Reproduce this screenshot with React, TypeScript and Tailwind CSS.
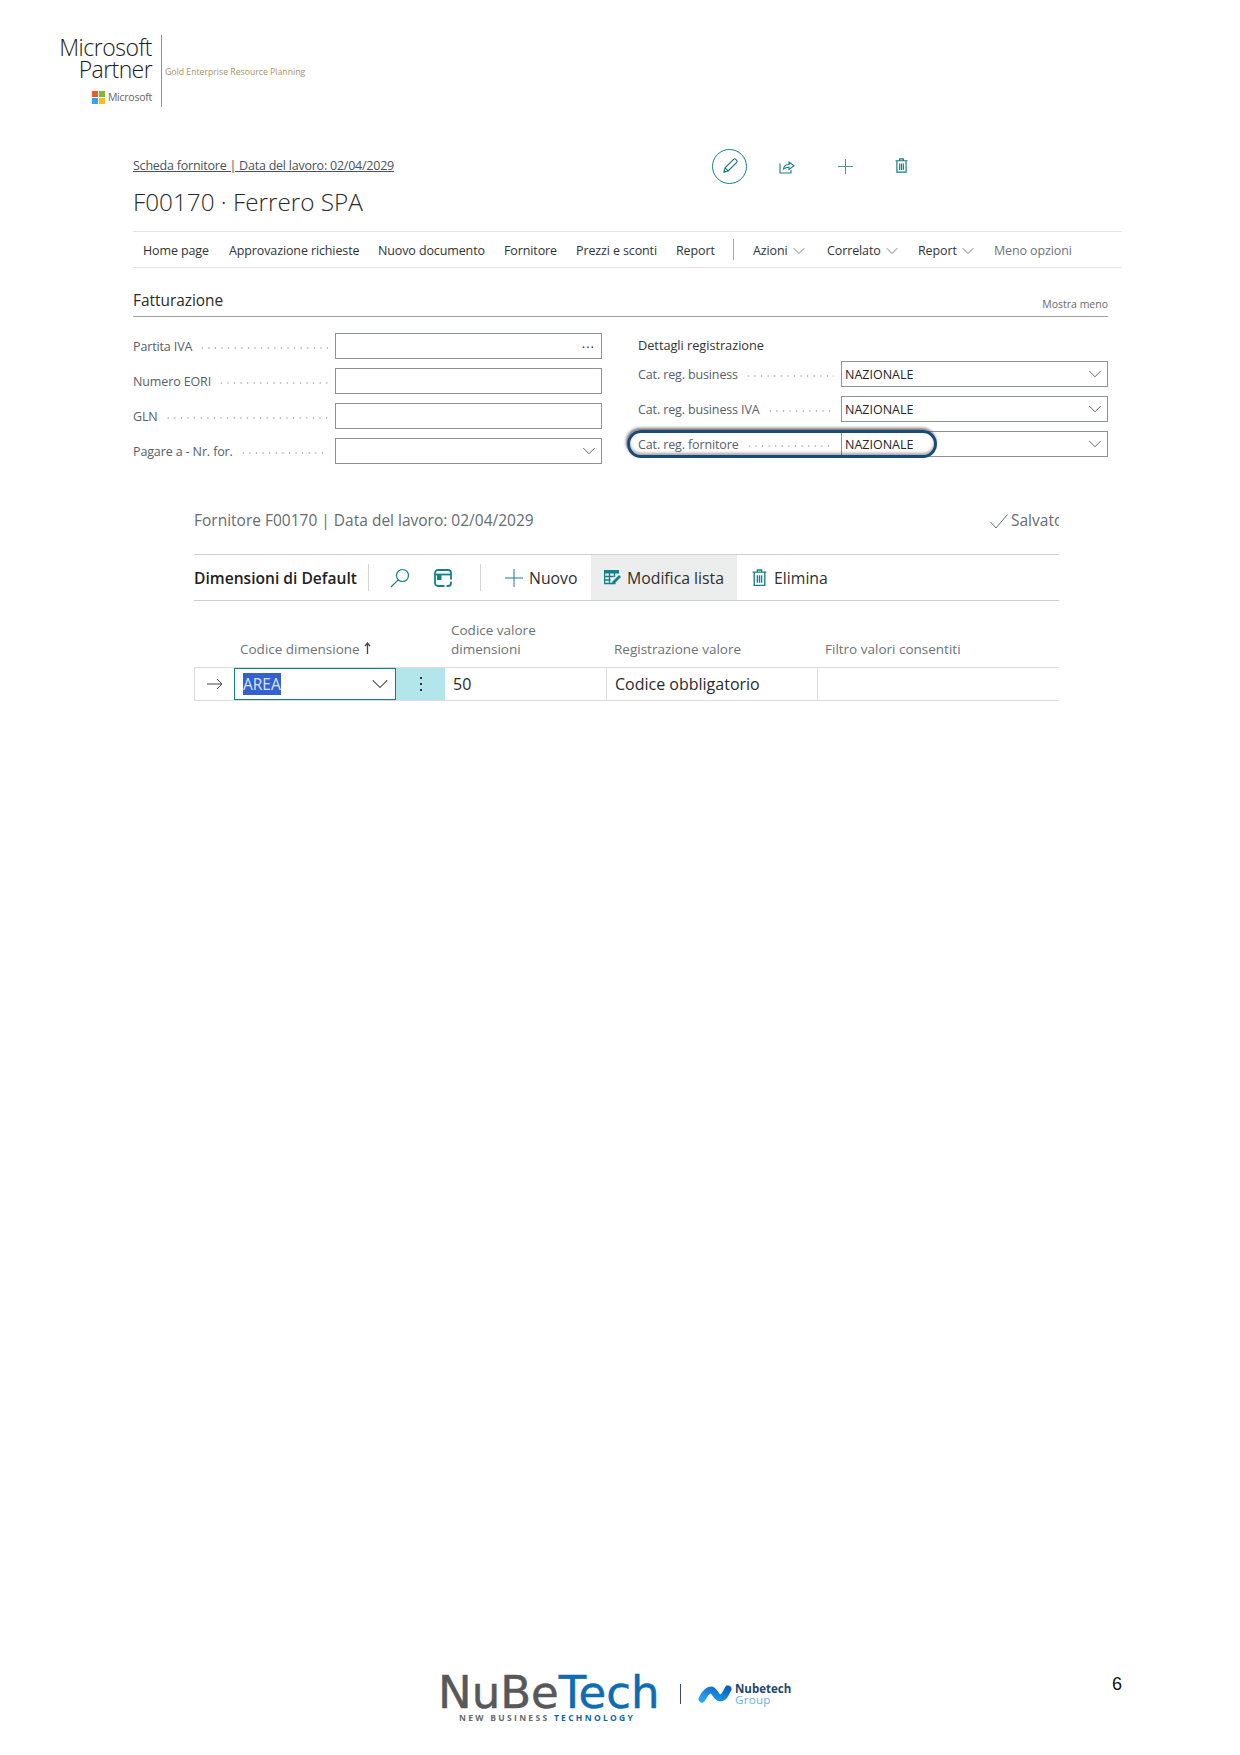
import React, { FC } from "react";
import { ChevronDown } from "lucide-react";

const uiFont = "font-['Open_Sans','Noto_Sans',sans-serif]";
const dots =
  "flex-1 h-[4px] mx-[7px] bg-[radial-gradient(circle,#b4b8bd_0.8px,transparent_1.1px)] bg-[length:6.6px_4px]";

const PencilIcon: FC = () => (
  <svg width="18" height="18" viewBox="0 0 18 18" fill="none" stroke="#14747e" strokeWidth="1.1">
    <path d="M3 15l1-4.2L12.6 2.3c.6-.6 1.5-.6 2.1 0l1 1c.6.6.6 1.500 0 2.100L7.200 14z" />
    <path d="M4 10.800l3.200 3.200M3 15l1.600-.4" />
  </svg>
);

const ShareIcon: FC = () => (
  <svg width="16" height="15" viewBox="0 0 16 15" fill="none" stroke="#1b7f88" strokeWidth="1.100">
    <path d="M1 4.500v9.500h11V11" />
    <path d="M4.500 10c.4-3 2.500-4.500 5.500-4.500V3l5 3.800-5 3.700V8.200c-2.200 0-4 .5-5.500 1.800z" />
  </svg>
);

const TrashIcon: FC<{ size?: number }> = ({ size = 14 }) => (
  <svg width={size} height={size * 1.2} viewBox="0 0 14 17" fill="none" stroke="#14808a" strokeWidth="1.300">
    <path d="M.5 3h13M5 3V1h4v2M2 3v12.500h10V3" />
    <path d="M5 6v7M7 6v7M9 6v7" />
  </svg>
);

const PlusIcon: FC<{ size: number; color: string }> = ({ size, color }) => (
  <svg width={size} height={size} viewBox="0 0 18 18" fill="none" stroke={color} strokeWidth={18 / size}>
    <path d="M9 0v18M0 9h18" />
  </svg>
);

const LayoutIcon: FC = () => (
  <svg width="18" height="18" viewBox="0 0 18 18" fill="none" stroke="#14808a" strokeWidth="1.800">
    <rect x="1" y="1" width="16" height="16" rx="3" />
    <path d="M1 5.500h16" />
    <rect x="3" y="5" width="4.500" height="6" fill="#14808a" stroke="none" />
    <path d="M17 10.500v2M10.500 17h2" strokeWidth="2.200" stroke="#fff" />
  </svg>
);

const SearchIcon: FC = () => (
  <svg width="20" height="20" viewBox="0 0 20 20" fill="none" stroke="#14808a" strokeWidth="1.200">
    <circle cx="12.500" cy="7.500" r="6" />
    <path d="M8.200 11.800L1 19" />
  </svg>
);

const EditListIcon: FC = () => (
  <svg width="18" height="16" viewBox="0 0 18 16">
    <rect x="0" y="0" width="15" height="3.500" fill="#14808a" />
    <path d="M.6 3v10.500h11M.6 6.500h9M.6 10h6M5.500 3v10.500M10.500 3v4" fill="none" stroke="#14808a" strokeWidth="1.300" />
    <path d="M7.500 14.500l1-3 6.500-6.500 2 2-6.500 6.500z" fill="#14808a" />
  </svg>
);

const MenuItem: FC<{ label: string; width: string; chevron?: boolean; muted?: boolean }> = ({
  label,
  width,
  chevron,
  muted,
}) => (
  <div className={`${width} flex items-center gap-[1px] whitespace-nowrap ${muted ? "text-[#6f747a]" : "text-[#30343a]"}`}>
    {label}
    {chevron && <ChevronDown size={20} strokeWidth={1} className="text-[#666]" />}
  </div>
);

const Field: FC<{ label: string; value?: string; kind?: "chevron" | "more" }> = ({ label, value, kind }) => (
  <div className="flex items-center h-[26px]">
    <span className="text-[#56606b] whitespace-nowrap text-[12.5px] tracking-[-0.13px] pt-[3px]">{label}</span>
    <span className={`${dots} mt-[3px]`} />
    <div className="w-[267px] h-[26px] shrink-0 border border-[#8d9399] flex items-center justify-between pl-[3px] pr-[1px] text-[12.500px] text-[#262626]">
      <span className="pt-[3px]">{value}</span>
      {kind === "chevron" && <ChevronDown size={22} strokeWidth={1} className="text-[#555]" />}
      {kind === "more" && <span className="text-[13px] leading-none tracking-[1px] pb-[6px] mr-[5px] text-[#333]">...</span>}
    </div>
  </div>
);

const MicrosoftLogo: FC = () => (
  <div className="flex h-[72px] pl-[56px] font-['Open_Sans',sans-serif]">
    <div className="w-[96px] flex flex-col items-end text-[#1a1a1a]">
      <span className="text-[23px] leading-[24px] tracking-[-0.5px] whitespace-nowrap font-light">Microsoft</span>
      <span className="text-[23px] leading-[22px] -mt-[1px] tracking-[-0.6px] font-light">Partner</span>
      <div className="flex items-center gap-[3px] mt-[10px]">
        <div className="grid grid-cols-2 gap-[1px] w-[13px] h-[13px]">
          <span className="bg-[#ef5a2b]" />
          <span className="bg-[#7fb82f]" />
          <span className="bg-[#35a5e8]" />
          <span className="bg-[#fbbc1c]" />
        </div>
        <span className="text-[10.500px] leading-[14px] text-[#666] tracking-[-0.25px]">Microsoft</span>
      </div>
    </div>
    <div className="w-[1px] h-[72px] bg-[#8f8f8f] ml-[9px]" />
    <div className="ml-[3px] mt-[31px] text-[8.700px] text-[#a8925c] whitespace-nowrap">
      Gold Enterprise Resource Planning
    </div>
  </div>
);

const Footer: FC = () => (
  <div className="mt-auto h-[84px] relative flex items-start pl-[438px] font-['Open_Sans',sans-serif]">
    <div className="w-[219px] flex flex-col">
      <div className="text-[45px] leading-[43px] h-[43px] whitespace-nowrap font-['DejaVu_Sans',sans-serif] [-webkit-text-stroke:0.5px]">
        <span className="text-[#58585a]">NuBe</span>
        <span className="text-[#0f6cb2]">Tech</span>
      </div>
      <div className="ml-[21px] text-[8.500px] font-bold tracking-[2.300px] leading-[8px] whitespace-nowrap">
        <span className="text-[#6a6a6c]">NEW BUSINESS </span>
        <span className="text-[#14679f]">TECHNOLOGY</span>
      </div>
    </div>
    <div className="w-[1px] h-[20px] bg-[#3f4a5c] ml-[23px] mt-[13px]" />
    <svg width="34" height="20" viewBox="0 0 34 20" className="ml-[17px] mt-[13px]">
      <defs>
        <linearGradient id="swoosh" x1="0" y1="1" x2="1" y2="0">
          <stop offset="0" stopColor="#2aa3ee" />
          <stop offset="1" stopColor="#0b62c4" />
        </linearGradient>
      </defs>
      <path
        d="M4 15C7 9 10 6 13 6c4 0 5 8 9 8 4 0 6-5 8-9"
        fill="none"
        stroke="url(#swoosh)"
        strokeWidth="7"
        strokeLinecap="round"
      />
    </svg>
    <div className="ml-[3px] mt-[12px] flex flex-col text-[11.500px] leading-[11px]">
      <span className="font-bold text-[#22466f]">Nubetech</span>
      <span className="text-[#5db4e8] tracking-[0.3px]">Group</span>
    </div>
    <div className="absolute left-[1112px] top-[1px] text-[18px] leading-[24px] text-[#111] font-['Liberation_Sans',sans-serif]">
      6
    </div>
  </div>
);

const App: FC = () => {
  return (
    <div className={`w-[1240px] h-[1755px] bg-white flex flex-col pt-[35px] ${uiFont}`}>
      <MicrosoftLogo />

      {/* scheda fornitore */}
      <div className="ml-[133px] w-[989px] mt-[41px]">
        <div className="flex items-center h-[36px]">
          <div className="w-[579px] text-[12.500px] text-[#4a525c] underline whitespace-nowrap tracking-[-0.23px]">
            Scheda fornitore | Data del lavoro: 02/04/2029
          </div>
          <div className="w-[35px] h-[35px] rounded-full border border-[#17808a] flex items-center justify-center">
            <PencilIcon />
          </div>
          <div className="ml-[32px] w-[16px] flex justify-center"><ShareIcon /></div>
          <div className="ml-[40px] w-[20px] flex justify-center">
            <PlusIcon size={15} color="#4f979e" />
          </div>
          <div className="ml-[39px] w-[14px] flex justify-center"><TrashIcon size={13} /></div>
        </div>
        <div className="h-[38px] text-[24.300px] leading-[36px] font-light text-[#2a2a2a]">
          F00170 · Ferrero SPA
        </div>
        <div className="mt-[9px] h-[37px] border-y border-[#e4e4e4] pl-[10px] pt-[3px] flex items-center text-[12.500px] tracking-[-0.12px]">
          <MenuItem label="Home page" width="w-[86px]" />
          <MenuItem label="Approvazione richieste" width="w-[149px]" />
          <MenuItem label="Nuovo documento" width="w-[126px]" />
          <MenuItem label="Fornitore" width="w-[72px]" />
          <MenuItem label="Prezzi e sconti" width="w-[100px]" />
          <MenuItem label="Report" width="w-[57px]" />
          <div className="w-[1px] h-[21px] bg-[#a9a9a9] mr-[19px] -mt-[3px]" />
          <MenuItem label="Azioni" width="w-[74px]" chevron />
          <MenuItem label="Correlato" width="w-[91px]" chevron />
          <MenuItem label="Report" width="w-[76px]" chevron />
          <MenuItem label="Meno opzioni" width="w-[90px]" muted />
        </div>

        <div className="w-[975px] mt-[24px] h-[25px] border-b border-[#a3a3a3] flex justify-between">
          <span className="text-[15.400px] leading-[18px] font-medium text-[#2b2b2b]">Fatturazione</span>
          <span className="text-[10.500px] leading-[22px] text-[#6a6a6a] pt-[1px]">Mostra meno</span>
        </div>

        <div className="w-[975px] mt-[16px] flex justify-between">
          <div className="w-[469px] flex flex-col gap-[9px]">
            <Field label="Partita IVA" kind="more" />
            <Field label="Numero EORI" />
            <Field label="GLN" />
            <Field label="Pagare a - Nr. for." kind="chevron" />
          </div>
          <div className="w-[470px] relative">
            <div className="h-[24px] text-[12.800px] leading-[24px] font-medium text-[#333] tracking-[-0.05px]">Dettagli registrazione</div>
            <div className="mt-[4px] flex flex-col gap-[9px]">
              <Field label="Cat. reg. business" value="NAZIONALE" kind="chevron" />
              <Field label="Cat. reg. business IVA" value="NAZIONALE" kind="chevron" />
              <Field label="Cat. reg. fornitore" value="NAZIONALE" kind="chevron" />
            </div>
            <div className="absolute left-[-11px] top-[97px] w-[310px] h-[28px] rounded-full border-[3px] border-[#1c4a78] shadow-[-1px_-2px_3px_rgba(60,60,60,0.7),inset_0_-2px_3px_rgba(60,60,60,0.45)]" />
          </div>
        </div>
      </div>

      {/* dimensioni di default */}
      <div className="ml-[194px] w-[865px] mt-[44px] overflow-hidden">
        <div className="h-[24px] flex justify-between items-center pt-[2px] text-[15.500px] text-[#666c72]">
          <span className="whitespace-nowrap">Fornitore F00170 | Data del lavoro: 02/04/2029</span>
          <div className="w-[69px] flex items-center gap-[3px] overflow-hidden whitespace-nowrap">
            <svg width="18" height="15" viewBox="0 0 18 15" fill="none" stroke="#666c72" strokeWidth="1" className="shrink-0">
              <path d="M.5 8l5.500 6L17.500.5" />
            </svg>
            <span>Salvato</span>
          </div>
        </div>
        <div className="mt-[22px] h-[47px] border-y border-[#cfcfcf] flex items-center text-[15.800px] text-[#2f2f2f]">
          <span className="w-[174px] font-semibold text-[15.600px] text-[#222] whitespace-nowrap pt-[2px]">Dimensioni di Default</span>
          <div className="w-[1px] h-[27px] bg-[#d4d4d4]" />
          <div className="ml-[21px] w-[20px]"><SearchIcon /></div>
          <div className="ml-[24px] w-[18px]"><LayoutIcon /></div>
          <div className="ml-[28px] w-[1px] h-[27px] bg-[#d4d4d4]" />
          <div className="ml-[24px]"><PlusIcon size={18} color="#14808a" /></div>
          <span className="ml-[6px] w-[62px] pt-[2px]">Nuovo</span>
          <div className="h-full w-[146px] bg-[#eceded] flex items-center pl-[13px] gap-[5px] whitespace-nowrap">
            <EditListIcon />
            <span className="pt-[2px]">Modifica lista</span>
          </div>
          <div className="ml-[15px]"><TrashIcon size={15} /></div>
          <span className="ml-[7px] pt-[2px]">Elimina</span>
        </div>
        <div className="h-[66px] flex items-end pb-[8px] text-[13.500px] leading-[19px] text-[#6c7278]">
          <span className="w-[211px] pl-[46px] flex items-center gap-[4px] whitespace-nowrap">
            Codice dimensione
            <svg width="7" height="12" viewBox="0 0 7 12" fill="none" stroke="#444" strokeWidth="1.300" className="mb-[3px]">
              <path d="M3.500 12V1M1 4l2.500-3L6 4" />
            </svg>
          </span>
          <span className="ml-[46px] w-[163px]">
            Codice valore
            <br />
            dimensioni
          </span>
          <span className="w-[211px]">Registrazione valore</span>
          <span>Filtro valori consentiti</span>
        </div>
        <div className="h-[34px] border-y border-[#dcdcdc] flex items-stretch text-[16px] text-[#2b2b2b]">
          <div className="w-[40px] flex items-center justify-center border-l border-[#dcdcdc]">
            <svg width="16" height="12" viewBox="0 0 16 12" fill="none" stroke="#444" strokeWidth="1">
              <path d="M0 6h15M10 1l5 5-5 5" />
            </svg>
          </div>
          <div className="w-[162px] border border-[#157f88] flex items-center justify-between pl-[8px] pr-[1px] text-[15.500px]">
            <span className="bg-[#3461cf] text-[#dbe5fb] leading-[22px]">AREA</span>
            <ChevronDown size={28} strokeWidth={0.9} className="text-[#333]" />
          </div>
          <div className="w-[49px] bg-[#b2e6ea] flex items-center justify-center">
            <div className="flex flex-col gap-[4px]">
              <span className="w-[2px] h-[2px] bg-[#333]" />
              <span className="w-[2px] h-[2px] bg-[#333]" />
              <span className="w-[2px] h-[2px] bg-[#333]" />
            </div>
          </div>
          <div className="w-[162px] pl-[8px] flex items-center border-r border-[#dcdcdc]">50</div>
          <div className="w-[211px] pl-[8px] flex items-center border-r border-[#dcdcdc] whitespace-nowrap">Codice obbligatorio</div>
        </div>
      </div>

      <Footer />
    </div>
  );
};

export default App;
